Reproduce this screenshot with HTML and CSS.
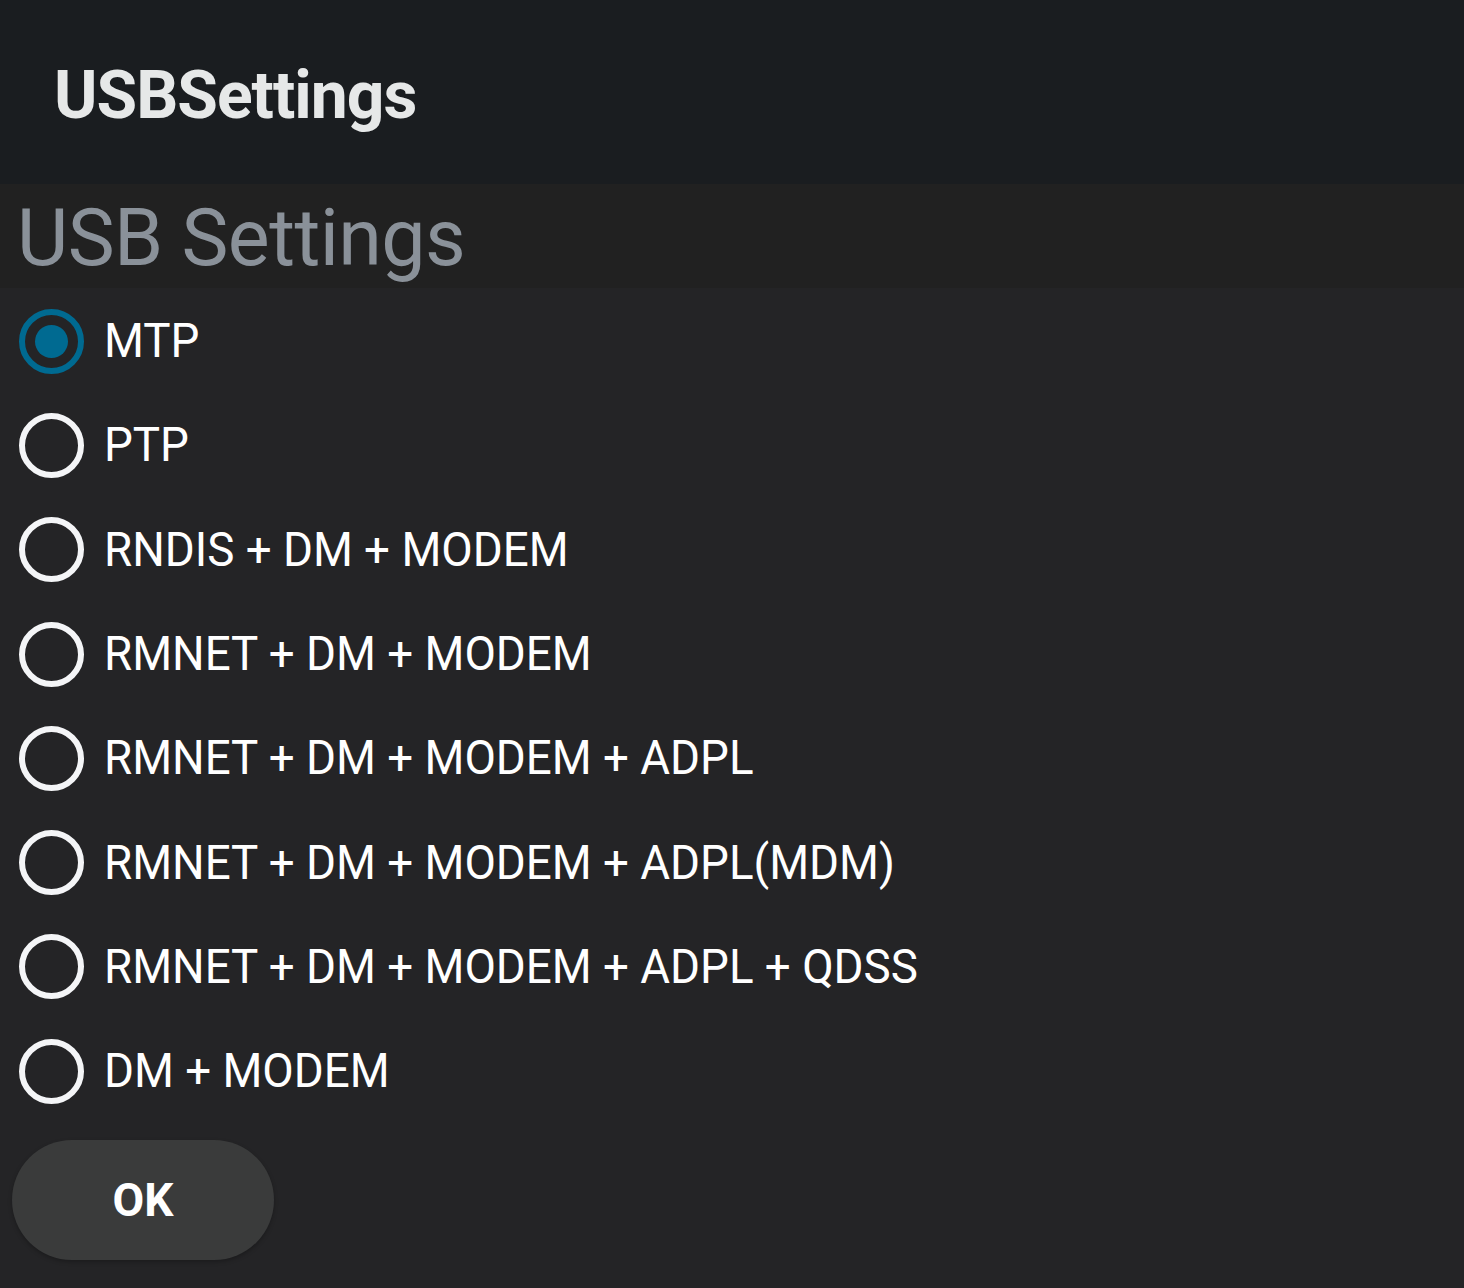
FILE: index.html
```html
<!DOCTYPE html>
<html>
<head>
<meta charset="utf-8">
<link rel="stylesheet" href="styles.css">
</head>
<body>
<div class="app">
  <header class="appbar"><h1 class="appbar-title">USBSettings</h1></header>
  <div class="section-head"><h2 class="section-title">USB Settings</h2></div>
  <ul class="options">
    <li class="option"><span class="radio checked"></span><span class="label">MTP</span></li>
    <li class="option"><span class="radio"></span><span class="label">PTP</span></li>
    <li class="option"><span class="radio"></span><span class="label">RNDIS + DM + MODEM</span></li>
    <li class="option"><span class="radio"></span><span class="label">RMNET + DM + MODEM</span></li>
    <li class="option"><span class="radio"></span><span class="label">RMNET + DM + MODEM + ADPL</span></li>
    <li class="option"><span class="radio"></span><span class="label">RMNET + DM + MODEM + ADPL(MDM)</span></li>
    <li class="option"><span class="radio"></span><span class="label">RMNET + DM + MODEM + ADPL + QDSS</span></li>
    <li class="option"><span class="radio"></span><span class="label">DM + MODEM</span></li>
  </ul>
  <div class="actions"><button class="ok-btn">OK</button></div>
</div>
</body>
</html>
```
FILE: styles.css
```css
html, body {
  margin: 0;
  padding: 0;
  background: #242426;
  font-family: Roboto, "Liberation Sans", sans-serif;
}
.app {
  width: 1464px;
  height: 1288px;
  background: #242426;
  display: flex;
  flex-direction: column;
}
.appbar {
  height: 184px;
  background: #1a1d20;
  display: flex;
  align-items: center;
  padding-left: 54px;
  box-sizing: border-box;
}
.appbar-title {
  margin: 0;
  font-size: 66px;
  font-weight: 700;
  color: #e6e8e8;
  letter-spacing: -1px;
  line-height: 1;
  position: relative;
  top: 4px;
}
.section-head {
  height: 104px;
  background: #212121;
  display: flex;
  align-items: center;
  padding-left: 17px;
  box-sizing: border-box;
}
.section-title {
  margin: 0;
  font-size: 79px;
  font-weight: 400;
  color: #8a9199;
  line-height: 1;
  letter-spacing: -0.6px;
  position: relative;
  top: 2px;
}
.options {
  list-style: none;
  margin: 0;
  padding: 0;
  padding-top: 1px;
}
.option {
  height: 104.3px;
  display: flex;
  align-items: center;
  padding-left: 19px;
}
.radio {
  width: 65px;
  height: 65px;
  box-sizing: border-box;
  border: 6px solid #f4f5f7;
  border-radius: 50%;
  display: flex;
  align-items: center;
  justify-content: center;
  flex: none;
}
.radio.checked {
  border-color: #006a91;
}
.radio.checked::after {
  content: "";
  width: 33px;
  height: 33px;
  border-radius: 50%;
  background: #006a91;
}
.label {
  display: inline-block;
  margin-left: 20px;
  font-size: 48px;
  color: #ffffff;
  line-height: 1;
  white-space: nowrap;
  transform: scaleX(0.952);
  transform-origin: left center;
}
.actions {
  padding-left: 12px;
  padding-top: 17px;
}
.ok-btn {
  width: 262px;
  height: 120px;
  border: none;
  border-radius: 60px;
  background: #3a3b3b;
  color: #ffffff;
  font-family: Roboto, "Liberation Sans", sans-serif;
  font-size: 46px;
  font-weight: 700;
  box-shadow: 0 2px 4px rgba(0,0,0,0.25);
  padding: 0;
}
```
